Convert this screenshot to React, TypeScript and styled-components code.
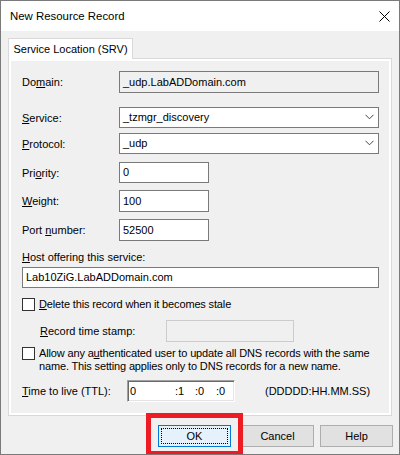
import React from "react";
import styled, { createGlobalStyle } from "styled-components";

const Global = createGlobalStyle`
  html, body { margin: 0; padding: 0; background: #f0f0f0; }
  * { box-sizing: border-box; }
`;

const Window = styled.div`
  position: relative;
  width: 400px;
  height: 455px;
  border: 1px solid #7a7a7a;
  background: #f0f0f0;
  font-family: "Liberation Sans", Arial, sans-serif;
  font-size: 11px;
  color: #000;
  display: flex;
  flex-direction: column;
  overflow: hidden;
`;

const TitleBar = styled.div`
  height: 30px;
  background: #fff;
  display: flex;
  align-items: center;
  justify-content: space-between;
  padding-left: 9px;
  font-size: 11.4px;
  flex-shrink: 0;
`;

const CloseBox = styled.div`
  width: 46px;
  height: 30px;
  display: flex;
  align-items: center;
  justify-content: center;
  margin-right: -8px;
`;

const Body = styled.div`
  flex: 1;
  padding: 7px 7px 0 7px;
  display: flex;
  flex-direction: column;
`;

const TabStrip = styled.div`
  display: flex;
  height: 20px;
`;

const Tab = styled.div`
  width: 125px;
  height: 21px;
  border: 1px solid #d9d9d9;
  border-bottom: none;
  background: #fff;
  display: flex;
  align-items: center;
  justify-content: center;
  font-size: 11px;
  position: relative;
  z-index: 1;
  padding-bottom: 1px;
`;

const Panel = styled.div`
  height: 358px;
  border: 1px solid #d9d9d9;
  background: #fff;
  padding: 2px;
`;

const Page = styled.div`
  height: 100%;
  background: #f0f0f0;
  padding: 0 10px 0 11px;
  display: flex;
  flex-direction: column;
`;

const FieldRow = styled.div<{ $mt: number; $h: number; $col?: number; $box?: string }>`
  display: grid;
  grid-template-columns: ${(p) => p.$col ?? 97}px ${(p) => p.$box ?? "1fr"};
  align-items: center;
  margin-top: ${(p) => p.$mt}px;
  height: ${(p) => p.$h}px;
`;

const Label = styled.span<{ $indent?: number }>`
  padding-left: ${(p) => p.$indent ?? 0}px;
  white-space: nowrap;
`;

const U = styled.span`
  text-decoration: underline;
`;

const TextBox = styled.div<{ $readonly?: boolean; $disabled?: boolean }>`
  height: 100%;
  border: 1px solid ${(p) => (p.$disabled ? "#cccccc" : "#7a7a7a")};
  background: ${(p) => (p.$readonly || p.$disabled ? "#f0f0f0" : "#fff")};
  display: flex;
  align-items: center;
  padding: 0 0 1px 3px;
  white-space: nowrap;
`;

const Combo = styled.div`
  height: 100%;
  border: 1px solid #7a7a7a;
  background: #fff;
  display: flex;
  align-items: center;
  justify-content: space-between;
  padding: 0 4px 1px 3px;
`;

const PlainLabel = styled.div<{ $mt: number }>`
  margin-top: ${(p) => p.$mt}px;
  height: 13px;
  line-height: 13px;
`;

const WideBox = styled(TextBox)<{ $mt: number }>`
  margin-top: ${(p) => p.$mt}px;
  height: 21px;
`;

const CheckRow = styled.div<{ $mt: number }>`
  display: flex;
  gap: 4px;
  margin-top: ${(p) => p.$mt}px;
  align-items: flex-start;
`;

const CheckBox = styled.div`
  width: 13px;
  height: 13px;
  border: 1px solid #333;
  background: #fff;
  flex-shrink: 0;
`;

const CheckText = styled.div`
  line-height: 13px;
  white-space: nowrap;
  letter-spacing: -0.15px;
`;

const TTLRow = styled.div<{ $mt: number }>`
  display: flex;
  align-items: center;
  margin-top: ${(p) => p.$mt}px;
  height: 22px;
`;

const TTLLabel = styled.span`
  width: 105px;
`;

const TTLBox = styled.div`
  width: 108px;
  height: 22px;
  background: #fff;
  border-top: 1px solid #a0a0a0;
  border-left: 1px solid #a0a0a0;
  border-right: 1px solid #fff;
  border-bottom: 1px solid #fff;
  box-shadow: inset 1px 1px 0 #696969, inset -1px -1px 0 #e3e3e3;
  display: flex;
  align-items: center;
  padding: 0 0 1px 2px;
`;

const TTLPart = styled.span<{ $w: number }>`
  width: ${(p) => p.$w}px;
`;

const TTLHint = styled.span`
  margin-left: 30px;
`;

const ButtonRow = styled.div`
  display: flex;
  justify-content: flex-end;
  gap: 6px;
  margin-top: 9px;
  margin-right: -1px;
`;

const Button = styled.div<{ $primary?: boolean }>`
  width: 73px;
  height: 22px;
  border: 1px solid ${(p) => (p.$primary ? "#0078d7" : "#adadad")};
  background: ${(p) => (p.$primary ? "#e5f1fb" : "#e1e1e1")};
  display: flex;
  align-items: center;
  justify-content: center;
  margin-right: ${(p) => (p.$primary ? 4 : 0)}px;
  position: relative;
  padding-bottom: 1px;
`;

const FocusRing = styled.div`
  position: absolute;
  inset: 2px;
  border: 1px dotted #000;
`;

const Highlight = styled.div`
  position: absolute;
  left: 145px;
  top: 412px;
  width: 97px;
  height: 43px;
  border: 5px solid #ed1c24;
  pointer-events: none;
`;

const Chevron = () => (
  <svg width="9" height="6" viewBox="0 0 9 6">
    <path d="M0.5 0.8 L4.5 4.8 L8.5 0.8" fill="none" stroke="#444" strokeWidth="1" />
  </svg>
);

const CloseIcon = () => (
  <svg width="11" height="11" viewBox="0 0 11 11">
    <path d="M0.5 0.5 L10.5 10.5 M10.5 0.5 L0.5 10.5" stroke="#000" strokeWidth="1" />
  </svg>
);

export default function App() {
  return (
    <>
      <Global />
      <Window>
        <TitleBar>
          <span>New Resource Record</span>
          <CloseBox>
            <CloseIcon />
          </CloseBox>
        </TitleBar>
        <Body>
          <TabStrip>
            <Tab>Service Location (SRV)</Tab>
          </TabStrip>
          <Panel>
            <Page>
              <FieldRow $mt={10} $h={22}>
                <Label>
                  Do<U>m</U>ain:
                </Label>
                <TextBox $readonly>_udp.LabADDomain.com</TextBox>
              </FieldRow>
              <FieldRow $mt={14} $h={21}>
                <Label>
                  <U>S</U>ervice:
                </Label>
                <Combo>
                  <span>_tzmgr_discovery</span>
                  <Chevron />
                </Combo>
              </FieldRow>
              <FieldRow $mt={5} $h={21}>
                <Label>
                  <U>P</U>rotocol:
                </Label>
                <Combo>
                  <span>_udp</span>
                  <Chevron />
                </Combo>
              </FieldRow>
              <FieldRow $mt={8} $h={21} $box="90px">
                <Label>
                  Pri<U>o</U>rity:
                </Label>
                <TextBox>0</TextBox>
              </FieldRow>
              <FieldRow $mt={7} $h={22} $box="90px">
                <Label>
                  <U>W</U>eight:
                </Label>
                <TextBox>100</TextBox>
              </FieldRow>
              <FieldRow $mt={7} $h={22} $box="90px">
                <Label>
                  Port <U>n</U>umber:
                </Label>
                <TextBox>52500</TextBox>
              </FieldRow>
              <PlainLabel $mt={10}>
                <U>H</U>ost offering this service:
              </PlainLabel>
              <WideBox $mt={3}>Lab10ZiG.LabADDomain.com</WideBox>
              <CheckRow $mt={10}>
                <CheckBox />
                <CheckText>
                  <U>D</U>elete this record when it becomes stale
                </CheckText>
              </CheckRow>
              <FieldRow $mt={9} $h={22} $col={144} $box="128px">
                <Label $indent={18}>
                  <U>R</U>ecord time stamp:
                </Label>
                <TextBox $disabled />
              </FieldRow>
              <CheckRow $mt={5}>
                <CheckBox />
                <CheckText>
                  Allow any a<U>u</U>thenticated user to update all DNS records with the same
                  <br />
                  name. This setting applies only to DNS records for a new name.
                </CheckText>
              </CheckRow>
              <TTLRow $mt={7}>
                <TTLLabel>
                  <U>T</U>ime to live (TTL):
                </TTLLabel>
                <TTLBox>
                  <TTLPart $w={45}>0</TTLPart>
                  <TTLPart $w={20}>:1</TTLPart>
                  <TTLPart $w={21}>:0</TTLPart>
                  <TTLPart $w={15}>:0</TTLPart>
                </TTLBox>
                <TTLHint>(DDDDD:HH.MM.SS)</TTLHint>
              </TTLRow>
            </Page>
          </Panel>
          <ButtonRow>
            <Button $primary>
              <FocusRing />
              OK
            </Button>
            <Button>Cancel</Button>
            <Button>Help</Button>
          </ButtonRow>
        </Body>
        <Highlight />
      </Window>
    </>
  );
}
